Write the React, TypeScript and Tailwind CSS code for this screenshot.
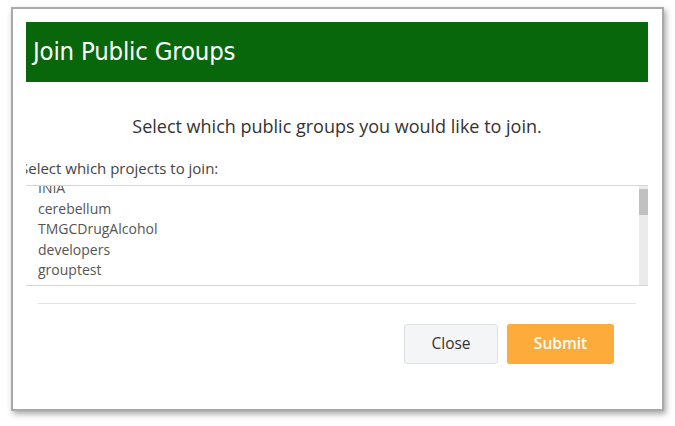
import React from 'react';

const groups = ['INIA', 'cerebellum', 'TMGCDrugAlcohol', 'developers', 'grouptest'];

export default function App() {
  return (
    <div className="w-[675px] h-[426px] bg-white pt-[7px] pl-[11px]" style={{ fontFamily: '"Open Sans", sans-serif' }}>
      {/* Modal window */}
      <div className="w-[653px] h-[404px] bg-white border-2 border-[#a9a9a9] shadow-[2px_3px_6px_rgba(0,0,0,0.35)] pt-[13px] pl-[13px] pr-[14px]">
        {/* Header */}
        <div className="h-[60px] bg-[#07670a] flex items-center px-[7px]">
          <h1
            className="text-white text-[25.5px] leading-none tracking-[-0.2px]"
            style={{ fontFamily: '"DejaVu Sans Condensed", "DejaVu Sans", sans-serif' }}
          >
            Join Public Groups
          </h1>
        </div>

        {/* Body */}
        <p className="text-center text-[18px] text-[#333] mt-[32px] leading-[24px]">
          Select which public groups you would like to join.
        </p>

        <div className="overflow-hidden mt-[20px]">
          <p className="-ml-[6px] text-[15px] text-[#444] leading-[20px]">Select which projects to join:</p>
        </div>

        {/* Listbox */}
        <div className="mt-[7px] h-[101px] border-y border-[#d6d6d6] flex">
          <div className="flex-1 overflow-hidden pl-[12px]">
            <div className="-mt-[8px]">
              {groups.map(g => (
                <div key={g} className="text-[14px] text-[#555] leading-[20.5px]">
                  {g}
                </div>
              ))}
            </div>
          </div>
          <div className="w-[9px] bg-[#ebebeb] pt-[3px]">
            <div className="h-[26px] bg-[#c1c1c1]" />
          </div>
        </div>

        {/* Footer */}
        <div className="mx-[12px] mt-[17px] border-t border-[#e5e5e5]" />
        <div className="flex justify-end gap-[9px] mt-[20px] pr-[34px]">
          <button className="w-[94px] h-[40px] bg-[#f4f5f6] border border-[#dde1e4] rounded-[3px] text-[15.5px] text-[#333]">
            Close
          </button>
          <button className="w-[107px] h-[40px] bg-[#fdab3a] rounded-[3px] text-[15.5px] text-white font-semibold">
            Submit
          </button>
        </div>
      </div>
    </div>
  );
}
